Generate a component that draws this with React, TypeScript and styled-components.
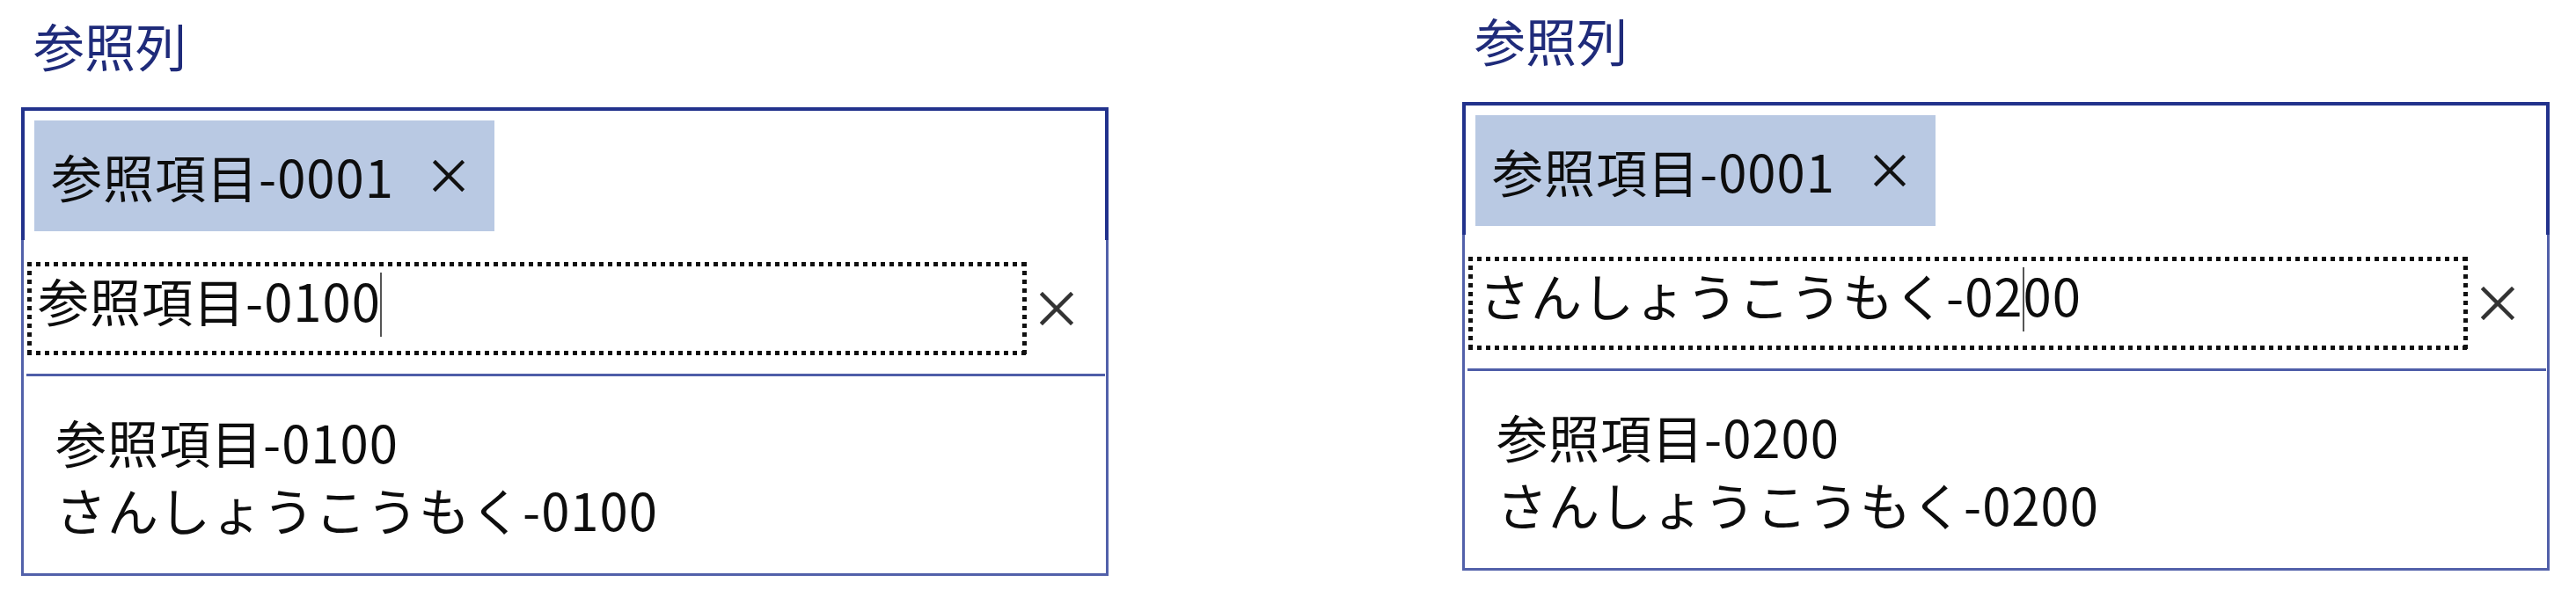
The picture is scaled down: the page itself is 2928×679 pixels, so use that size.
import styled, { createGlobalStyle } from 'styled-components'

const GlobalStyle = createGlobalStyle`
  html, body {
    margin: 0;
    padding: 0;
    background: #ffffff;
  }
  body {
    font-family: "Noto Sans CJK JP", "Noto Sans", sans-serif;
    color: #0d0d0d;
  }
`

const Page = styled.div`
  display: flex;
  align-items: flex-start;
  gap: 402px;
  padding-left: 24px;
`

const Panel = styled.section<{ $top: number }>`
  display: flex;
  flex-direction: column;
  width: 1236px;
  padding-top: ${p => p.$top}px;
`

const FieldLabel = styled.div`
  font-size: 58px;
  line-height: 58px;
  color: #1f2b7a;
  margin: 0 0 42px 14px;
`

const LookupBox = styled.div`
  display: flex;
  flex-direction: column;
  border: 3px solid #5261aa;
  background: #ffffff;
`

const SelectedArea = styled.div`
  display: flex;
  margin: -3px -3px 0;
  padding: 11px 11px 10px;
  border: 4px solid #22328c;
  border-bottom: none;
`

const Chip = styled.div`
  display: flex;
  align-items: center;
  gap: 44px;
  height: 126px;
  padding: 0 34px 0 19px;
  background: #b9c9e3;
  font-size: 58px;
  line-height: 1;
  letter-spacing: 1px;
`

const SearchRow = styled.div`
  display: flex;
  align-items: center;
  gap: 15px;
  margin: 25px 0 0 4px;
`

// square dots like the focus rectangle of the original control
const SearchField = styled.div`
  display: flex;
  align-items: center;
  box-sizing: border-box;
  width: 1136px;
  height: 106px;
  padding: 5px 5px 15px 12px;
  background:
    linear-gradient(to right, #111 50%, transparent 50%) left top / 10px 5px repeat-x,
    linear-gradient(to right, #111 50%, transparent 50%) left bottom / 10px 5px repeat-x,
    linear-gradient(to bottom, #111 50%, transparent 50%) left top / 5px 10px repeat-y,
    linear-gradient(to bottom, #111 50%, transparent 50%) right top / 5px 10px repeat-y;
  font-size: 58px;
  line-height: 1;
  letter-spacing: 1px;
  white-space: pre;
`

const Caret = styled.span`
  display: inline-block;
  width: 2px;
  height: 73px;
  margin: 0 -1px;
  background: #555555;
  vertical-align: -17px;
`

const Divider = styled.div`
  margin: 21px 1px 0 3px;
  border-top: 3px solid #4e5da8;
`

const Suggestions = styled.div`
  display: flex;
  flex-direction: column;
  padding: 36px 0 34px 36px;
  font-size: 58px;
  line-height: 77px;
  letter-spacing: 1px;
`

const CrossIcon = ({ size, color, stroke }: { size: number; color: string; stroke: number }) => (
  <svg width={size} height={size} viewBox="0 0 38 38" fill="none">
    <path d="M3 3 L35 35 M35 3 L3 35" stroke={color} strokeWidth={stroke} strokeLinecap="square" />
  </svg>
)

type LookupProps = {
  top: number
  typedBefore: string
  typedAfter: string
  code: string
}

const LookupField = ({ top, typedBefore, typedAfter, code }: LookupProps) => (
  <Panel $top={top}>
    <FieldLabel>参照列</FieldLabel>
    <LookupBox>
      <SelectedArea>
        <Chip>
          <span>参照項目-0001</span>
          <CrossIcon size={36} color="#111" stroke={4.5} />
        </Chip>
      </SelectedArea>
      <SearchRow>
        <SearchField>
          <span>
            {typedBefore}
            <Caret />
            {typedAfter}
          </span>
        </SearchField>
        <CrossIcon size={38} color="#333" stroke={4.5} />
      </SearchRow>
      <Divider />
      <Suggestions>
        <div>参照項目-{code}</div>
        <div>さんしょうこうもく-{code}</div>
      </Suggestions>
    </LookupBox>
  </Panel>
)

export default function App() {
  return (
    <>
      <GlobalStyle />
      <Page>
        <LookupField top={22} typedBefore="参照項目-0100" typedAfter="" code="0100" />
        <LookupField top={16} typedBefore="さんしょうこうもく-02" typedAfter="00" code="0200" />
      </Page>
    </>
  )
}
